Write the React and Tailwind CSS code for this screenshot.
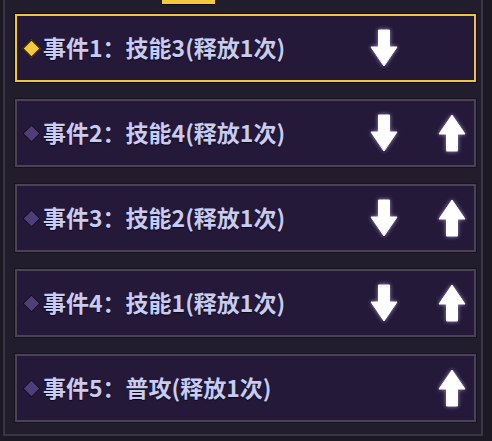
import React from 'react';

const events = [
  { id: 1, label: '事件1：技能3(释放1次)', down: true, up: false, active: true },
  { id: 2, label: '事件2：技能4(释放1次)', down: true, up: true },
  { id: 3, label: '事件3：技能2(释放1次)', down: true, up: true },
  { id: 4, label: '事件4：技能1(释放1次)', down: true, up: true },
  { id: 5, label: '事件5：普攻(释放1次)', down: false, up: true },
];

// arrow drawn pointing down; flipped for up
const Arrow = ({ up }) => (
  <svg
    width="28"
    height="38"
    viewBox="0 0 28 38"
    className={up ? 'rotate-180 drop-shadow-[0_0_2px_rgba(210,190,255,0.7)]' : 'drop-shadow-[0_0_2px_rgba(210,190,255,0.7)]'}
  >
    <path d="M8.5 1 H19.5 V18 H27 L14 37 L1 18 H8.5 Z" fill="#ffffff" stroke="#ffffff" strokeWidth="1" strokeLinejoin="round" />
  </svg>
);

const EventRow = ({ ev }) => (
  <div
    className={
      ev.active
        ? 'flex h-[68px] items-center border-2 border-[#f1c43e] bg-[#25193a] shadow-[0_0_0_1px_#0d0a12]'
        : 'flex h-[68px] items-center border-2 border-[#4a4358] bg-[#25193a] shadow-[0_0_0_1px_#17131d]'
    }
  >
    <div className="flex w-[26px] justify-end pr-[5px]">
      <div
        className={
          ev.active
            ? 'h-[13px] w-[13px] rotate-45 border-[1.5px] border-[#120c05] bg-[#f6c93c]'
            : 'h-[13px] w-[13px] rotate-45 border-[1.5px] border-[#0e0a14] bg-[#4e3f7c]'
        }
      />
    </div>
    <span className="flex-1 pb-[2px] font-['Noto_Sans_CJK_SC',sans-serif] text-[23px] font-bold text-[#c8cbf2] [text-shadow:0_1px_1px_#0c0814]">
      {ev.label}
    </span>
    <div className="flex w-[28px] justify-center">{ev.down && <Arrow />}</div>
    <div className="w-[40px]" />
    <div className="flex w-[28px] justify-center">{ev.up && <Arrow up />}</div>
    <div className="w-[8px]" />
  </div>
);

export default function App() {
  return (
    <div className="relative h-[441px] w-[492px] overflow-hidden bg-[#1c1924]">
      {/* selected tab marker, over the top edge */}
      <div className="absolute left-[162px] top-0 h-[5px] w-[53px] border-b-[1.5px] border-[#0c0906] bg-[#f6c93c]" />
      <div className="ml-[3px] h-[436px] w-[480px] border-x-2 border-b-2 border-[#3a3546] bg-[#221d2d]">
        <div className="flex flex-col gap-[17px] pl-[10px] pr-[5px] pt-[14px]">
          {events.map(ev => (
            <EventRow key={ev.id} ev={ev} />
          ))}
        </div>
      </div>
    </div>
  );
}
